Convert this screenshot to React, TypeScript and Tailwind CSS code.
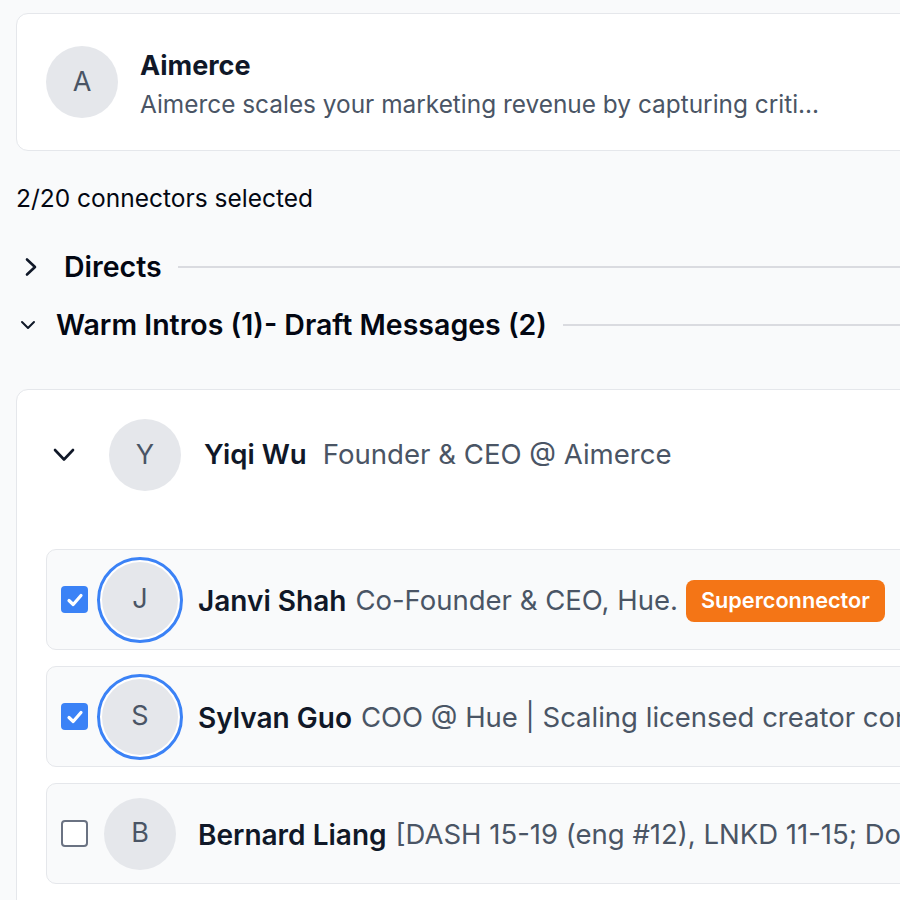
import React from 'react'

type Connector = {
  initial: string
  name: string
  headline: string
  checked: boolean
  superconnector?: boolean
}

const CONNECTORS: Connector[] = [
  { initial: 'J', name: 'Janvi Shah', headline: 'Co-Founder & CEO, Hue.', checked: true, superconnector: true },
  {
    initial: 'S',
    name: 'Sylvan Guo',
    headline: 'COO @ Hue | Scaling licensed creator content for consumer brands',
    checked: true,
  },
  {
    initial: 'B',
    name: 'Bernard Liang',
    headline: '[DASH 15-19 (eng #12), LNKD 11-15; DoorDash early engineer, angel investor]',
    checked: false,
  },
]

function ChevronRight() {
  return (
    <svg viewBox="0 0 14 20" className="w-[14px] h-[20px]" fill="none" stroke="currentColor" strokeWidth="2.6" strokeLinecap="round" strokeLinejoin="round" aria-hidden="true">
      <polyline points="3,2.5 11,10 3,17.5" />
    </svg>
  )
}

function ChevronDownSmall() {
  return (
    <svg viewBox="0 0 16 10" className="w-[16px] h-[10px]" fill="none" stroke="currentColor" strokeWidth="2" strokeLinecap="round" strokeLinejoin="round" aria-hidden="true">
      <polyline points="2,2 8,8 14,2" />
    </svg>
  )
}

function ChevronDown() {
  return (
    <svg viewBox="0 0 24 16" className="w-[24px] h-[16px]" fill="none" stroke="currentColor" strokeWidth="2.6" strokeLinecap="round" strokeLinejoin="round" aria-hidden="true">
      <polyline points="3,3 12,12.5 21,3" />
    </svg>
  )
}

function Checkbox({ checked }: { checked: boolean }) {
  if (checked) {
    return (
      <span className="flex items-center justify-center w-[27px] h-[27px] rounded-[4px] bg-[#3b82f6] shrink-0">
        <svg viewBox="0 0 20 20" className="w-[20px] h-[20px]" fill="none" stroke="white" strokeWidth="3.2" strokeLinecap="round" strokeLinejoin="round" aria-hidden="true">
          <polyline points="4,10.5 8.2,14.5 16,5.5" />
        </svg>
      </span>
    )
  }
  return <span className="block w-[27px] h-[27px] rounded-[4px] border-2 border-gray-500 bg-white shrink-0" />
}

function Avatar({ letter, size = 'w-[72px] h-[72px]' }: { letter: string; size?: string }) {
  return (
    <span className={`${size} flex items-center justify-center rounded-full bg-gray-200 text-gray-600 text-[27px] shrink-0`}>
      {letter}
    </span>
  )
}

function SectionHeading({ label, open }: { label: string; open: boolean }) {
  return (
    <div className="flex items-center h-[34px]">
      {open ? (
        <span className="w-[40px] pl-[4px] flex items-center text-gray-900">
          <ChevronDownSmall />
        </span>
      ) : (
        <span className="w-[48px] pl-[8px] flex items-center text-gray-900">
          <ChevronRight />
        </span>
      )}
      <span className="text-[28.5px] font-semibold text-gray-950 whitespace-nowrap">{label}</span>
      <span className="ml-[16px] flex-1 h-[2px] bg-[#dadbe0]" />
    </div>
  )
}

export default function App() {
  return (
    <div className="w-[900px] h-[900px] overflow-hidden bg-gray-50" style={{ fontFamily: 'Inter, "Noto Sans", sans-serif' }}>
      <div className="w-[1200px] pt-[13px] pl-[16px]">
        {/* Company card */}
        <div className="h-[138px] flex items-center gap-[22px] pl-[29px] bg-white border border-gray-200 rounded-xl">
          <Avatar letter="A" />
          <div className="flex flex-col pt-[6px]">
            <span className="text-[27px] leading-[36px] font-bold text-gray-900">Aimerce</span>
            <span className="mt-[2px] text-[24.4px] leading-[36px] text-gray-600">
              Aimerce scales your marketing revenue by capturing criti...
            </span>
          </div>
        </div>

        <p className="mt-[31px] text-[24.5px] leading-[32px] text-gray-950">2/20 connectors selected</p>

        <div className="mt-[36px]">
          <SectionHeading label="Directs" open={false} />
        </div>
        <div className="mt-[24px]">
          <SectionHeading label="Warm Intros (1)- Draft Messages (2)" open />
        </div>

        {/* Warm intro group */}
        <div className="mt-[47px] bg-white border border-gray-200 rounded-xl pt-[29px] pl-[29px] pb-[30px]">
          <div className="flex items-center">
            <span className="w-[63px] pl-[6px] text-gray-900 flex items-center">
              <ChevronDown />
            </span>
            <Avatar letter="Y" />
            <span className="ml-[23px] text-[27.6px] font-semibold text-gray-900">Yiqi Wu</span>
            <span className="ml-[16px] text-[27.6px] text-gray-600">Founder &amp; CEO @ Aimerce</span>
          </div>

          <ul className="mt-[58px] flex flex-col gap-[16px]">
            {CONNECTORS.map((c) => (
              <li
                key={c.name}
                className="h-[101px] flex items-center pl-[14px] bg-gray-50 border border-gray-200 rounded-[10px] overflow-hidden"
              >
                <Checkbox checked={c.checked} />
                <span className="ml-[9px] w-[86px] h-[86px] flex items-center justify-center shrink-0">
                  {c.checked ? (
                    <span className="w-[86px] h-[86px] rounded-full border-[3px] border-[#3b82f6] bg-white p-[2px] flex">
                      <Avatar letter={c.initial} size="w-full h-full" />
                    </span>
                  ) : (
                    <Avatar letter={c.initial} />
                  )}
                </span>
                <div className="ml-[15px] pt-[2px] flex items-center whitespace-nowrap">
                  <span className="text-[28px] font-semibold text-gray-900">{c.name}</span>
                  <span className="ml-[9px] text-[27.5px] text-gray-600">{c.headline}</span>
                  {c.superconnector && (
                    <span className="ml-[8px] px-[15px] h-[42px] flex items-center rounded-[8px] bg-[#f47516] text-white text-[21.7px] font-semibold">
                      Superconnector
                    </span>
                  )}
                </div>
              </li>
            ))}
          </ul>
        </div>
      </div>
    </div>
  )
}
